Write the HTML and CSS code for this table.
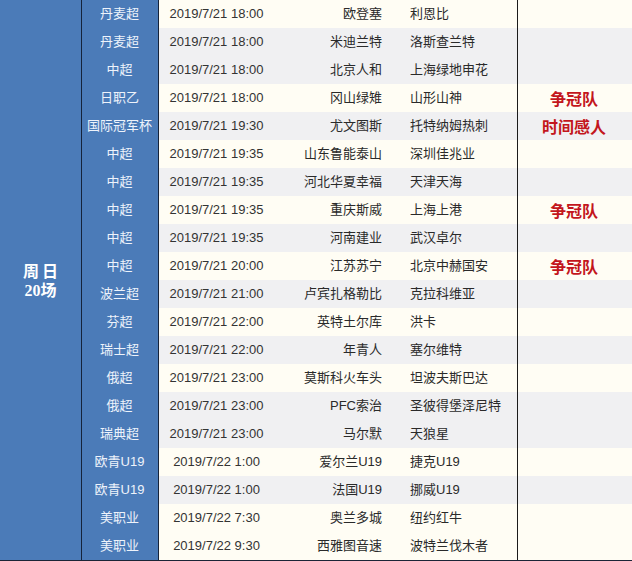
FILE: index.html
```html
<!DOCTYPE html>
<html lang="zh">
<head>
<meta charset="utf-8">
<link rel="stylesheet" href="styles.css">
</head>
<body>
<div class="sheet">
  <div class="day"><div class="day-label"><span class="d1">周日</span><span class="d2">20场</span></div></div>
  <div class="rows">
    <div class="row cream"><div class="lg">丹麦超</div><div class="dt">2019/7/21 18:00</div><div class="home">欧登塞</div><div class="away">利恩比</div><div class="note"></div></div>
    <div class="row gray"><div class="lg">丹麦超</div><div class="dt">2019/7/21 18:00</div><div class="home">米迪兰特</div><div class="away">洛斯查兰特</div><div class="note"></div></div>
    <div class="row gray"><div class="lg">中超</div><div class="dt">2019/7/21 18:00</div><div class="home">北京人和</div><div class="away">上海绿地申花</div><div class="note"></div></div>
    <div class="row cream"><div class="lg">日职乙</div><div class="dt">2019/7/21 18:00</div><div class="home">冈山绿雉</div><div class="away">山形山神</div><div class="note">争冠队</div></div>
    <div class="row gray"><div class="lg">国际冠军杯</div><div class="dt">2019/7/21 19:30</div><div class="home">尤文图斯</div><div class="away">托特纳姆热刺</div><div class="note">时间感人</div></div>
    <div class="row cream"><div class="lg">中超</div><div class="dt">2019/7/21 19:35</div><div class="home">山东鲁能泰山</div><div class="away">深圳佳兆业</div><div class="note"></div></div>
    <div class="row gray"><div class="lg">中超</div><div class="dt">2019/7/21 19:35</div><div class="home">河北华夏幸福</div><div class="away">天津天海</div><div class="note"></div></div>
    <div class="row cream"><div class="lg">中超</div><div class="dt">2019/7/21 19:35</div><div class="home">重庆斯威</div><div class="away">上海上港</div><div class="note">争冠队</div></div>
    <div class="row gray"><div class="lg">中超</div><div class="dt">2019/7/21 19:35</div><div class="home">河南建业</div><div class="away">武汉卓尔</div><div class="note"></div></div>
    <div class="row cream"><div class="lg">中超</div><div class="dt">2019/7/21 20:00</div><div class="home">江苏苏宁</div><div class="away">北京中赫国安</div><div class="note">争冠队</div></div>
    <div class="row gray"><div class="lg">波兰超</div><div class="dt">2019/7/21 21:00</div><div class="home">卢宾扎格勒比</div><div class="away">克拉科维亚</div><div class="note"></div></div>
    <div class="row cream"><div class="lg">芬超</div><div class="dt">2019/7/21 22:00</div><div class="home">英特土尔库</div><div class="away">洪卡</div><div class="note"></div></div>
    <div class="row gray"><div class="lg">瑞士超</div><div class="dt">2019/7/21 22:00</div><div class="home">年青人</div><div class="away">塞尔维特</div><div class="note"></div></div>
    <div class="row cream"><div class="lg">俄超</div><div class="dt">2019/7/21 23:00</div><div class="home">莫斯科火车头</div><div class="away">坦波夫斯巴达</div><div class="note"></div></div>
    <div class="row gray"><div class="lg">俄超</div><div class="dt">2019/7/21 23:00</div><div class="home">PFC索治</div><div class="away">圣彼得堡泽尼特</div><div class="note"></div></div>
    <div class="row gray"><div class="lg">瑞典超</div><div class="dt">2019/7/21 23:00</div><div class="home">马尔默</div><div class="away">天狼星</div><div class="note"></div></div>
    <div class="row cream"><div class="lg">欧青U19</div><div class="dt">2019/7/22 1:00</div><div class="home">爱尔兰U19</div><div class="away">捷克U19</div><div class="note"></div></div>
    <div class="row gray"><div class="lg">欧青U19</div><div class="dt">2019/7/22 1:00</div><div class="home">法国U19</div><div class="away">挪威U19</div><div class="note"></div></div>
    <div class="row cream"><div class="lg">美职业</div><div class="dt">2019/7/22 7:30</div><div class="home">奥兰多城</div><div class="away">纽约红牛</div><div class="note"></div></div>
    <div class="row cream"><div class="lg">美职业</div><div class="dt">2019/7/22 9:30</div><div class="home">西雅图音速</div><div class="away">波特兰伐木者</div><div class="note"></div></div>
  </div>
</div>
</body>
</html>
```

FILE: styles.css
```css
html, body {
  margin: 0;
  padding: 0;
  background: #ffffff;
}
body {
  font-family: "Liberation Sans", "Noto Sans CJK SC", sans-serif;
  font-size: 13px;
  color: #2a2a2a;
}
.sheet {
  display: flex;
  width: 632px;
  height: 561px;
  border-bottom: 1px solid #1b2536;
  box-sizing: border-box;
  overflow: hidden;
}
.day {
  width: 81px;
  flex: none;
  background: #4b7bb8;
  border-right: 1px solid #15233a;
  display: flex;
  align-items: center;
  justify-content: center;
}
.day-label {
  display: flex;
  flex-direction: column;
  align-items: center;
  color: #ffffff;
  font-family: "Liberation Serif", "Noto Sans CJK SC", serif;
  font-size: 16px;
  line-height: 19px;
  font-weight: bold;
  padding-top: 1px;
}
.d1 {
  letter-spacing: 3px;
  margin-right: -3px;
}
.rows {
  display: flex;
  flex-direction: column;
  flex: 1;
}
.row {
  display: grid;
  grid-template-columns: 77px 115px 125px 118px 113px;
  height: 28px;
  line-height: 28px;
  flex: none;
}
.cream { background: #fffdf4; }
.gray { background: #f0f0f2; }
.lg {
  background: #4b7bb8;
  color: #eef3fb;
  text-align: center;
  border-right: 1px solid #15233a;
  padding-right: 1px;
}
.dt {
  text-align: center;
  color: #333333;
  padding-left: 0;
}
.home {
  text-align: right;
  padding-right: 17px;
}
.away {
  text-align: left;
  padding-left: 11px;
}
.note {
  border-left: 1px solid #1b1b1b;
  text-align: center;
  color: #c3161c;
  font-family: "Noto Sans CJK SC", sans-serif;
  font-weight: bold;
  font-size: 16px;
  padding-left: 0;
}
```
